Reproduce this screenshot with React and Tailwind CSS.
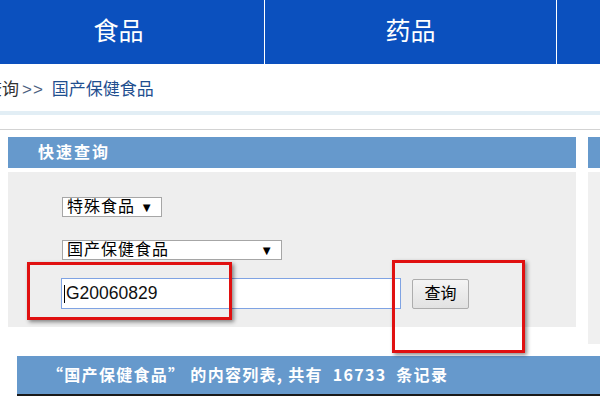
import React from "react";

const navItems = ["食品", "药品", ""];

function FakeSelect({ label, width }) {
  return (
    <div
      className={`flex h-[20px] items-center justify-between border border-[#a6a6a6] bg-white pl-[4px] pr-[8px] text-[16px] leading-none text-black ${width}`}
    >
      <span className="tracking-[1px]">{label}</span>
      <span className="text-[13px]">▼</span>
    </div>
  );
}

export default function App() {
  return (
    <div className="relative h-[400px] w-[600px] overflow-hidden bg-white font-['Liberation_Sans','Noto_Sans_CJK_SC',sans-serif]">
      {/* top nav */}
      <div className="flex h-[64px] bg-[#0b50be] ml-[-27px]">
        {navItems.map((n, i) => (
          <div
            key={i}
            className="flex w-[292px] shrink-0 items-center justify-center border-r border-white text-[25px] text-white"
          >
            {n}
          </div>
        ))}
      </div>

      {/* breadcrumb */}
      <div className="flex h-[47px] items-center pt-[5px] ml-[-15px] text-[17px] whitespace-nowrap">
        <span className="text-[#333]">查询</span>
        <span className="ml-[3px] tracking-[1px] text-[#4a5f80]">&gt;&gt;</span>
        <span className="ml-[8px] text-[#1f4f8f]">国产保健食品</span>
      </div>
      <div className="h-[4px] bg-[#e2eef5]" />
      <div className="h-[14px]" />
      <div className="h-px bg-[#d3d3d3]" />

      {/* panels */}
      <div className="mt-[7px] flex items-start">
        <div className="ml-[8px] w-[568px] shrink-0">
          <div className="flex h-[31px] items-center bg-[#6699cc] pl-[30px] text-[16px] font-bold tracking-[2px] text-white">
            快速查询
          </div>
          <div className="mt-[4px] h-[155px] bg-[#eeeeee] pl-[54px] pt-[25px]">
            <FakeSelect label="特殊食品" width="w-[100px]" />
            <div className="mt-[23px]">
              <FakeSelect label="国产保健食品" width="w-[220px]" />
            </div>
            <div className="mt-[18px] flex items-center gap-[11px] -ml-px">
              <div className="flex h-[31px] w-[340px] items-center border border-[#7fa3e3] bg-white pl-[2px] text-[17.5px] text-[#111]">
                <span className="mr-px h-[18px] w-px bg-black" />
                G20060829
              </div>
              <button className="h-[30px] w-[57px] rounded-[2px] border border-[#adadad] bg-gradient-to-b from-[#f4f4f4] to-[#e2e2e2] text-[16px] text-black">
                查询
              </button>
            </div>
          </div>
        </div>
        <div className="ml-[12px] w-[200px] shrink-0">
          <div className="h-[31px] bg-[#6699cc]" />
          <div className="mt-[4px] h-[172px] bg-[#f0f0f0]" />
        </div>
      </div>

      {/* list title bar */}
      <div className="ml-[17px] mt-[12px] flex h-[40px] items-center border-b-2 border-[#1a1a1a] bg-[#6699cc] pl-[30px] pb-[2px] font-['Noto_Sans_CJK_SC',sans-serif] text-[16px] font-bold tracking-[1.3px] text-white whitespace-nowrap">
        “国产保健食品”&nbsp;的内容列表,&nbsp;共有&nbsp; 16733 &nbsp;条记录
      </div>

      {/* red annotation boxes */}
      <div className="absolute left-[27px] top-[262px] h-[58px] w-[205px] border-[3px] border-[#e01010] shadow-[2px_2px_4px_rgba(0,0,0,0.45)]" />
      <div className="absolute left-[392px] top-[260px] h-[93px] w-[133px] border-[3px] border-[#e01010] shadow-[2px_2px_4px_rgba(0,0,0,0.45)]" />
    </div>
  );
}
